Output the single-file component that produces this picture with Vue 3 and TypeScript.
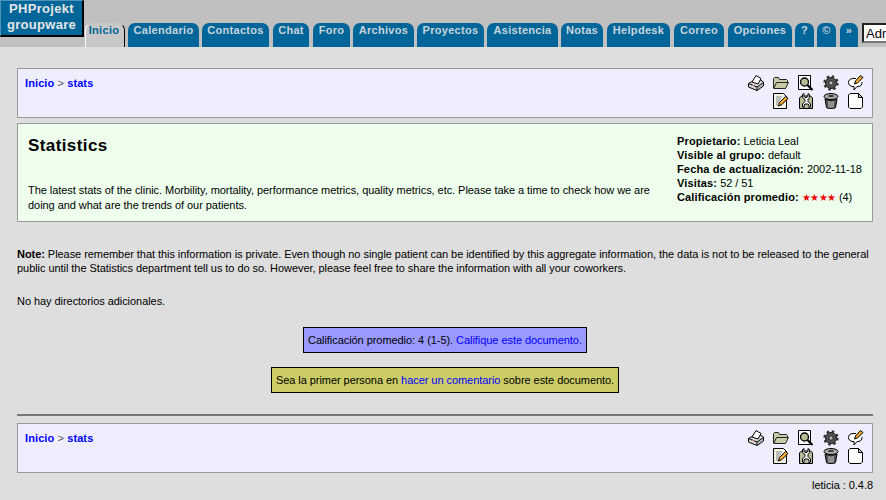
<script setup lang="ts">
const tabs = [
  { label: 'Calendario', w: 71, g: 3 }, { label: 'Contactos', w: 67, g: 4 }, { label: 'Chat', w: 36, g: 4 },
  { label: 'Foro', w: 37, g: 3 }, { label: 'Archivos', w: 61, g: 3 }, { label: 'Proyectos', w: 67, g: 3 },
  { label: 'Asistencia', w: 71, g: 3 }, { label: 'Notas', w: 42, g: 4 }, { label: 'Helpdesk', w: 63, g: 4 },
  { label: 'Correo', w: 50, g: 4 }, { label: 'Opciones', w: 64, g: 3 }, { label: '?', w: 19, g: 3 },
  { label: '©', w: 19, g: 4 }, { label: '»', w: 18, g: 4 },
]
const icons = ['print', 'folder', 'search', 'gear', 'comment', '', 'edit', 'tool', 'trash', 'page']
</script>

<template>
  <svg class="defs" width="0" height="0" aria-hidden="true">
    <symbol id="i-print" viewBox="0 0 16 16">
      <path d="M.5 8.500 5 6l6-2 4.500 3v4L9 15.500.5 12Z" fill="#d8d8d8" stroke="#000" />
      <path d="M4 7 8 .5l5 3L10 9Z" fill="#fff" stroke="#000" />
      <path d="M.5 8.500 9 12v3.500M9 12l6.500-4.500" fill="none" stroke="#000" />
      <path d="M10 13l5-3.500" stroke="#999" />
      <path d="M3 10.500h3" stroke="#c77" />
    </symbol>
    <symbol id="i-folder" viewBox="0 0 16 16">
      <path d="M.5 13V3.500l1-1h4l1 2h7l1 1v3" fill="#c9cba8" stroke="#222" />
      <path d="M.8 13.500 3.500 7.500h12l-3 6Z" fill="#c9cba8" stroke="#222" />
    </symbol>
    <symbol id="i-search" viewBox="0 0 16 16">
      <path d="M.5.5h12v14H.5Z" fill="#fff" stroke="#000" />
      <circle cx="6.500" cy="7" r="4" fill="#b9bb98" stroke="#000" stroke-width="1.300" />
      <path d="m9.500 10 5 5" stroke="#000" stroke-width="2.200" />
    </symbol>
    <symbol id="i-gear" viewBox="0 0 16 16">
      <circle cx="8" cy="8" r="5.500" fill="#555" stroke="#111" />
      <circle cx="8" cy="8" r="6.500" fill="none" stroke="#333" stroke-width="2.400" stroke-dasharray="2.500 2.600" />
      <circle cx="8" cy="8" r="2.200" fill="#bbb" stroke="#222" />
    </symbol>
    <symbol id="i-comment" viewBox="0 0 16 16">
      <path d="M8 3.500H5C2 3.500.5 5.500.5 7.500S2 11.500 5 11.500h1v3.500l3-3.500h1c3 0 4-2 4-4.500" fill="#fff" stroke="#000" />
      <path d="m6.500 9 1-3 5-5.500 2.500 2-5.500 5.500Z" fill="#f0a830" stroke="#000" />
    </symbol>
    <symbol id="i-edit" viewBox="0 0 16 16">
      <path d="M.5.500h10l3 3v12H.5Z" fill="#f2f2e6" stroke="#000" />
      <path d="M3 4h6M3 6h5M3 8h4M3 10h3M3 12h2" stroke="#888" />
      <path d="m5.500 13 1-3.500 6-6 2.500 2-6 6Z" fill="#f0a830" stroke="#000" />
    </symbol>
    <symbol id="i-tool" viewBox="0 0 16 16">
      <path d="M1.500 15.500V5l2-2h9l2 2v10.500Z" fill="#b9bb98" stroke="#000" />
      <path d="M4.500 1.500 6 .5v3l1 1h2l1-1v-3l1.500 1v3L10 6.500v2l2.500 2.500v3l-1.500 1v-3l-1-1H7l-1 1v3l-1.500-1v-3L7 8.500v-2L4.500 4.500Z" fill="#fff" stroke="#000" />
    </symbol>
    <symbol id="i-trash" viewBox="0 0 16 16">
      <ellipse cx="8" cy="3.500" rx="7" ry="3" fill="#aaa" stroke="#000" />
      <ellipse cx="8" cy="3" rx="3" ry="1" fill="#333" />
      <path d="M2 6 3.500 14.500c1 1.500 8 1.500 9 0L14 6c-3 1.500-9 1.500-12 0Z" fill="#555" stroke="#000" />
      <path d="M6 8v6.500M8 8.500v6.500M10 8v6.500" stroke="#ccc" />
    </symbol>
    <symbol id="i-page" viewBox="0 0 16 16">
      <path d="M2 .5h8.500l4 4V14l-1.500 1.500H2L.5 14V2Z" fill="#fff" stroke="#000" />
      <path d="M10.500.5v4h4Z" fill="#ccc" stroke="#000" />
    </symbol>
  </svg>

  <div class="page">
    <header class="topbar">
      <div class="logo">PHProjekt<br />groupware</div>
      <nav class="tabs">
        <a class="tab active">Inicio</a>
        <a
          v-for="t in tabs"
          :key="t.label"
          class="tab"
          :style="{ width: t.w + 'px', marginRight: t.g + 'px' }"
        >{{ t.label }}</a>
        <input class="search" value="Admin" />
      </nav>
    </header>

    <main class="content">
      <section class="panel crumbs">
        <div class="path"><a class="b">Inicio</a> <span class="sep">&gt;</span> <a class="b">stats</a></div>
        <div class="icons">
          <template v-for="(n, i) in icons" :key="i">
            <svg v-if="n" class="icon" width="16" height="16"><use :href="'#i-' + n" /></svg>
            <span v-else class="icon"></span>
          </template>
        </div>
      </section>

      <section class="panel doc">
        <div class="doc-main">
          <h1>Statistics</h1>
          <p>The latest stats of the clinic. Morbility, mortality, performance metrics, quality metrics, etc. Please take a time to check how we are doing and what are the trends of our patients.</p>
        </div>
        <div class="meta">
          <div><b>Propietario:</b> Leticia Leal</div>
          <div><b>Visible al grupo:</b> default</div>
          <div><b>Fecha de actualización:</b> 2002-11-18</div>
          <div><b>Visitas:</b> 52 / 51</div>
          <div><b>Calificación promedio:</b> <span class="stars">★★★★</span> (4)</div>
        </div>
      </section>

      <p class="note"><b>Note:</b> Please remember that this information is private. Even though no single patient can be identified by this aggregate information, the data is not to be released to the general public until the Statistics department tell us to do so. However, please feel free to share the information with all your coworkers.</p>
      <p class="nodirs">No hay directorios adicionales.</p>

      <div class="callout rate">Calificación promedio: 4 (1-5). <a>Califique este documento.</a></div>
      <div class="callout comment">Sea la primer persona en <a>hacer un comentario</a> sobre este documento.</div>

      <hr class="rule" />

      <section class="panel crumbs">
        <div class="path"><a class="b">Inicio</a> <span class="sep">&gt;</span> <a class="b">stats</a></div>
        <div class="icons">
          <template v-for="(n, i) in icons" :key="i">
            <svg v-if="n" class="icon" width="16" height="16"><use :href="'#i-' + n" /></svg>
            <span v-else class="icon"></span>
          </template>
        </div>
      </section>

      <footer class="foot">leticia : 0.4.8</footer>
    </main>
  </div>
</template>

<style>
html, body { margin: 0; background: #dedede; overflow: hidden; }
</style>

<style scoped>
.defs { position: absolute; }
.page {
  width: 886px;
  height: 500px;
  overflow: hidden;
  background: #dedede;
  font: 11px/15px "Liberation Sans", Arial, sans-serif;
  letter-spacing: -.055px;
  color: #000;
}
.topbar {
  display: flex;
  height: 47px;
  background: #c0c0c0;
}
.logo {
  width: 84px;
  height: 37px;
  box-sizing: border-box;
  flex: none;
  background: #006699;
  border-style: solid;
  border-width: 1px 2px 2px 1px;
  border-color: #4d94b8 #000 #000 #4d94b8;
  color: #e6e6e6;
  font: bold 13px/16px "Liberation Sans", Arial, sans-serif;
  letter-spacing: .3px;
  text-align: center;
}
.tabs {
  display: flex;
  align-items: flex-end;
  margin-left: 1px;
  white-space: nowrap;
}
.tab {
  display: block;
  flex: none;
  height: 24px;
  box-sizing: border-box;
  background: #006699;
  border-radius: 7px 7px 0 0;
  color: #c8d4dc;
  font-weight: bold;
  letter-spacing: .3px;
  text-align: center;
}
.tab.active {
  width: 40px;
  margin-right: 3px;
  padding-right: 2px;
  background: #c8c8c8;
  color: #006699;
  border-top: 1px solid transparent;
  border-left: 1px solid #fff;
  border-right: 1px solid #000;
  line-height: 13px;
}
.search {
  flex: none;
  width: 80px;
  height: 20px;
  margin: 0 0 4px;
  padding: 0 2px;
  box-sizing: border-box;
  border: 2px inset #777;
  background: #fff;
  font: 13px "Liberation Sans", Arial, sans-serif;
}
.content {
  padding: 21px 13px 0 17px;
}
.panel {
  box-sizing: border-box;
  border: 1px solid #999;
}
.crumbs {
  display: flex;
  justify-content: space-between;
  height: 50px;
  padding: 6px 8px 0 7px;
  background: #eeeeff;
}
.path { margin-top: 1px; font-weight: bold; color: #555; letter-spacing: .1px; }
.path .sep { font-weight: normal; }
.b { color: #0000ff; }
.icons {
  display: grid;
  grid-template-columns: repeat(5, 16px);
  grid-auto-rows: 16px;
  column-gap: 9px;
  row-gap: 2px;
}
.icon { display: block; }
.doc {
  display: flex;
  justify-content: space-between;
  height: 99px;
  margin-top: 5px;
  padding: 10px 10px 0;
  background: #eeffee;
}
.doc-main { width: 630px; padding-top: 2px; }
h1 {
  margin: 0 0 27px;
  font: bold 17px/20px "Liberation Sans", Arial, sans-serif;
  letter-spacing: .4px;
}
.doc p { margin: 0; }
.meta { width: 185px; flex: none; line-height: 14px; white-space: nowrap; }
.meta b { letter-spacing: .15px; }
.stars { color: #e00; font-size: 10px; letter-spacing: -.5px; }
.note { margin: 25px 0 0; line-height: 14px; }
.nodirs { margin: 19px 0 0; }
.callout {
  width: fit-content;
  margin-left: auto;
  margin-right: auto;
  box-sizing: border-box;
  height: 26px;
  border: 1px solid #000;
  padding: 5px 4px;
  line-height: 15px;
}
.callout a { color: #0000ff; }
.rate { margin-top: 18px; background: #9999ff; }
.comment { margin-top: 14px; background: #cccc66; }
.rule {
  margin: 21px 0 7px;
  height: 2px;
  border: 0;
  background: #777;
}
.foot {
  margin-top: 5px;
  text-align: right;
}
</style>
